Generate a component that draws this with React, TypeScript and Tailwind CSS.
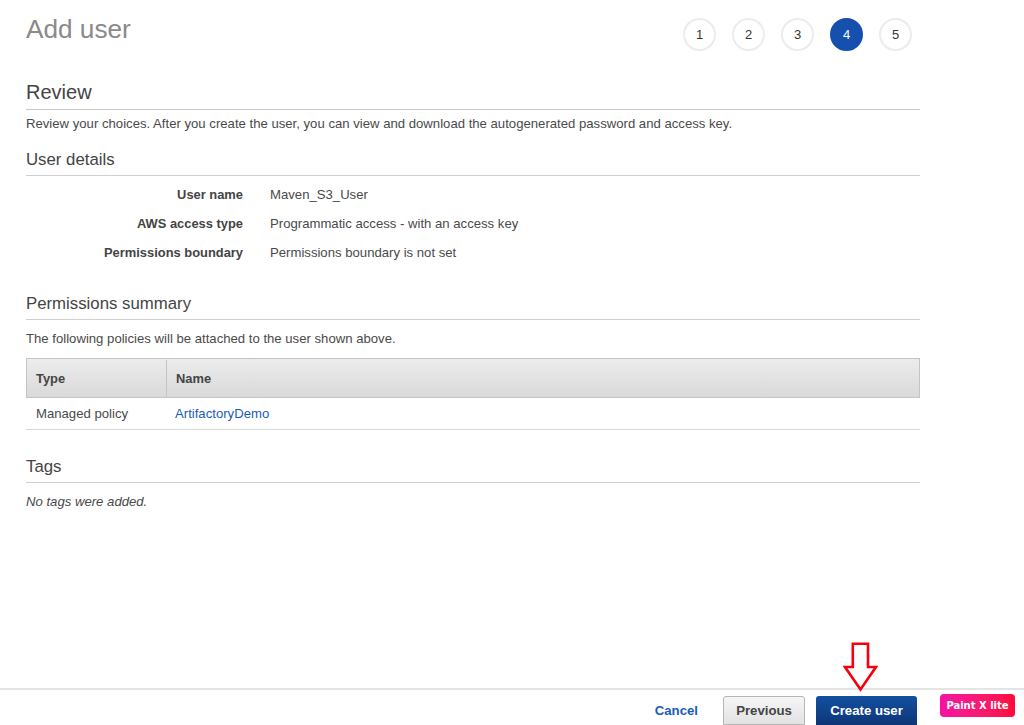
import React from "react";

const steps = [1, 2, 3, 4, 5];

const details = [
  { label: "User name", value: "Maven_S3_User" },
  { label: "AWS access type", value: "Programmatic access - with an access key" },
  { label: "Permissions boundary", value: "Permissions boundary is not set" },
];

function SectionTitle({ children, className }: { children: React.ReactNode; className: string }) {
  return (
    <h3 className={`border-b border-[#cfcfcf] text-[16.8px] leading-[20px] text-[#444] ${className}`}>
      {children}
    </h3>
  );
}

export default function App() {
  return (
    <div className="relative flex h-[725px] w-[1024px] flex-col overflow-hidden bg-white font-['Liberation_Sans',Arial,sans-serif] text-[#4a4a4a]">
      <main className="flex-1 pl-[26px] pr-[104px]">
        {/* Header with steps */}
        <div className="flex h-[72px] items-start justify-between">
          <h1 className="mt-[14px] text-[26.2px] leading-[30px] text-[#8a8a8a]">Add user</h1>
          <div className="mt-[18px] mr-[8px] flex gap-[16px]">
            {steps.map((step) => (
              <div
                key={step}
                className={`flex h-[33px] w-[33px] items-center justify-center rounded-full border-2 text-[13px] ${
                  step === 4
                    ? "border-[#1550ae] bg-[#1550ae] text-white"
                    : "border-[#ececec] bg-white text-[#333]"
                }`}
              >
                {step}
              </div>
            ))}
          </div>
        </div>

        {/* Review */}
        <h2 className="border-b border-[#c8c8c8] pb-[5px] mt-[8px] text-[20px] leading-[24px] text-[#444]">Review</h2>
        <p className="mt-[7px] text-[13.15px] leading-[14px]">
          Review your choices. After you create the user, you can view and download the autogenerated password and access key.
        </p>

        <SectionTitle className="mt-[19px] pb-[5px]">User details</SectionTitle>
        <dl className="mt-[4px] flex flex-col">
          {details.map((row) => (
            <div key={row.label} className="flex h-[29px] items-center">
              <dt className="w-[217px] text-right text-[12.9px] font-bold text-[#444]">{row.label}</dt>
              <dd className="ml-[27px] text-[13.15px]">{row.value}</dd>
            </div>
          ))}
        </dl>

        <SectionTitle className="mt-[27px] pb-[5px]">Permissions summary</SectionTitle>
        <p className="mt-[12px] text-[13.15px] leading-[14px]">The following policies will be attached to the user shown above.</p>

        {/* Policies table */}
        <div className="mt-[12px] border-b border-[#d8d8d8] text-[13.15px]">
          <div className="flex h-[40px] items-stretch border border-[#c4c4c4] bg-gradient-to-b from-[#ececec] to-[#d9d9d9] pt-px text-[12.9px] font-bold text-[#444]">
            <div className="flex w-[140px] items-center border-r border-[#c4c4c4] pl-[9px]">Type</div>
            <div className="flex items-center pl-[9px]">Name</div>
          </div>
          <div className="flex h-[31px] items-center">
            <div className="w-[149px] pl-[10px]">Managed policy</div>
            <a className="text-[#1a5cb8]">ArtifactoryDemo</a>
          </div>
        </div>

        <SectionTitle className="mt-[27px] pb-[5px]">Tags</SectionTitle>
        <p className="mt-[12px] text-[13.15px] leading-[14px] italic">No tags were added.</p>
      </main>

      {/* Footer */}
      <footer className="flex h-[37px] items-start justify-end border-t-2 border-[#e4e4e4] pr-[107px] pt-[6px] text-[13.2px] font-bold">
        <a className="mt-[8px] mr-[25px] leading-[14px] text-[#1a5cb8]">Cancel</a>
        <button className="mr-[11px] h-[29px] w-[82px] rounded-t-[3px] border border-[#b5b5b5] bg-gradient-to-b from-[#f6f6f6] to-[#e2e2e2] text-[#444]">
          Previous
        </button>
        <button className="h-[29px] w-[101px] rounded-t-[3px] bg-gradient-to-b from-[#14509f] to-[#0d3677] text-white">
          Create user
        </button>
      </footer>

      {/* Annotation arrow */}
      <svg className="absolute left-[843px] top-[642px]" width="36" height="50" viewBox="0 0 36 50" fill="none">
        <path
          d="M9.8 1.8H25V25H33L17.5 47.5L2 25H9.8Z"
          stroke="#f5000f"
          strokeWidth="2.6"
          strokeLinejoin="miter"
          fill="#fff"
        />
      </svg>

      {/* Watermark badge */}
      <div className="absolute left-[940px] top-[694px] flex h-[23px] w-[75px] items-center justify-center rounded-[4px] bg-gradient-to-r from-[#f510a4] to-[#ff0a38] font-['DejaVu_Sans',sans-serif] text-[10px] font-bold text-white">
        Paint X lite
      </div>
    </div>
  );
}
